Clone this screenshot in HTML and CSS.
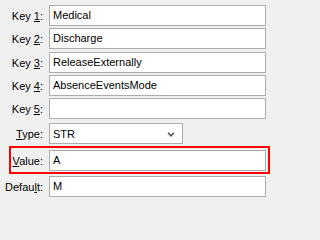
FILE: index.html
```html
<!DOCTYPE html>
<html>
<head>
<meta charset="utf-8">
<link rel="stylesheet" href="styles.css">
</head>
<body>
<div class="form">
  <div class="row r1"><label class="lbl">Key <u>1</u>:</label><div class="field">Medical</div></div>
  <div class="row r2"><label class="lbl">Key <u>2</u>:</label><div class="field">Discharge</div></div>
  <div class="row r3"><label class="lbl">Key <u>3</u>:</label><div class="field">ReleaseExternally</div></div>
  <div class="row r4"><label class="lbl">Key <u>4</u>:</label><div class="field">AbsenceEventsMode</div></div>
  <div class="row r5"><label class="lbl">Key <u>5</u>:</label><div class="field"></div></div>
  <div class="row r6"><label class="lbl"><u>T</u>ype:</label>
    <div class="select"><span class="sel-text">STR</span>
      <svg class="chev" width="8" height="5" viewBox="0 0 8 5"><path d="M1 0.8 L4 3.8 L7 0.8" fill="none" stroke="#505050" stroke-width="1.6"/></svg>
    </div>
  </div>
  <div class="highlight">
    <div class="row"><label class="lbl lbl-in"><u>V</u>alue:</label><div class="field field-in">A</div></div>
  </div>
  <div class="row r8"><label class="lbl">Defau<u>l</u>t:</label><div class="field">M</div></div>
</div>
</body>
</html>
```
FILE: styles.css
```css
html, body {
  margin: 0;
  padding: 0;
  background: #f0f0f0;
}
body {
  font-family: "Liberation Sans", Arial, sans-serif;
  font-size: 11px;
  color: #000;
}
.form {
  display: flex;
  flex-direction: column;
  padding-top: 5px;
}
.row {
  display: flex;
  align-items: center;
  height: 21px;
}
.r1 { margin-bottom: 2px; }
.r2 { margin-bottom: 3px; }
.r3 { margin-bottom: 2px; }
.r4 { margin-bottom: 2px; }
.r5 { margin-bottom: 4px; }
.r6 { margin-bottom: 2px; }
.r8 { margin-top: 2px; }
.lbl {
  width: 43px;
  padding-right: 6px;
  text-align: right;
  box-sizing: border-box;
  width: 49px;
  white-space: nowrap;
}
.field {
  box-sizing: border-box;
  width: 217px;
  height: 21px;
  border: 1px solid #acacac;
  background: #fff;
  padding: 0 3px;
  line-height: 19px;
  white-space: nowrap;
  overflow: hidden;
}
.select {
  box-sizing: border-box;
  width: 134px;
  height: 21px;
  border: 1px solid #acacac;
  background: #fff;
  padding: 0 3px;
  display: flex;
  align-items: center;
  justify-content: space-between;
}
.chev {
  margin-right: 4px;
  margin-top: 1px;
}
.highlight {
  margin-left: 9px;
  width: 261px;
  height: 28px;
  box-sizing: border-box;
  border: 2px solid #ff0000;
  padding: 2px 2px 1px 0;
}
.lbl-in {
  width: 38px;
}
```
